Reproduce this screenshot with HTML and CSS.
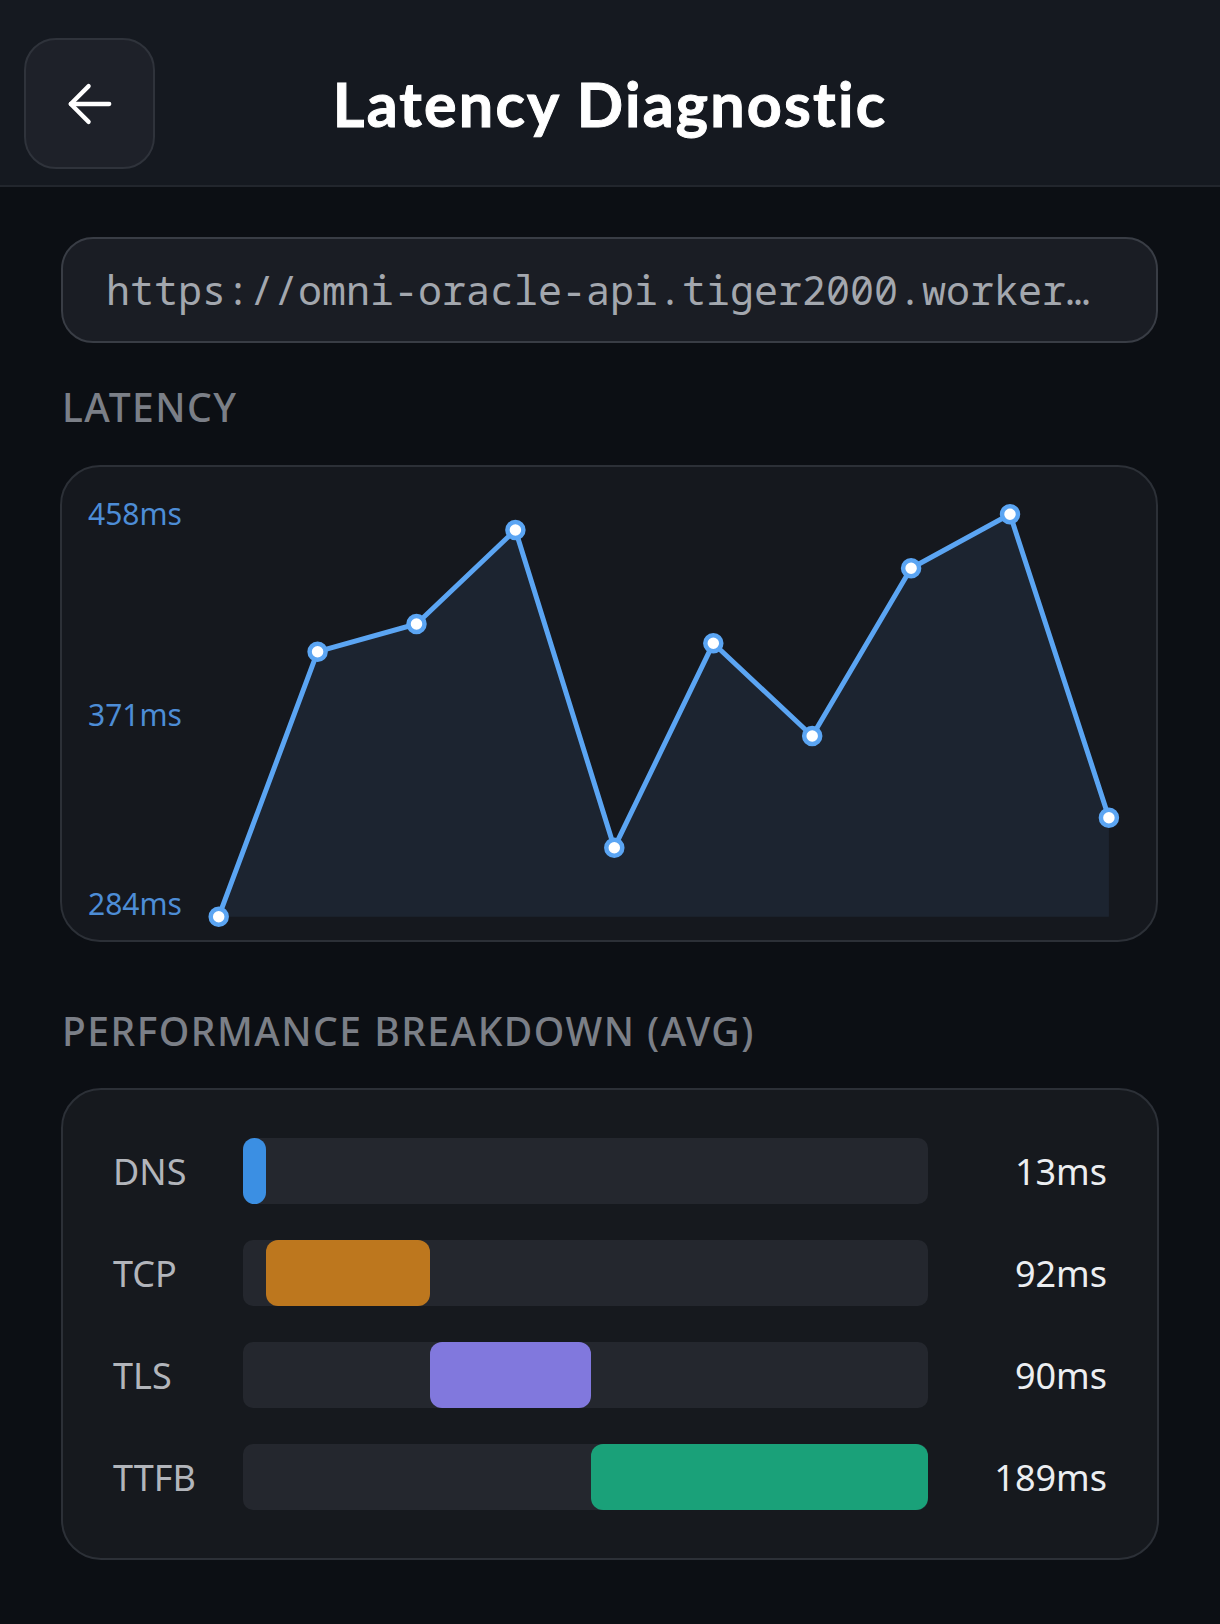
FILE: index.html
```html
<!DOCTYPE html>
<html lang="en">
<head>
<meta charset="utf-8">
<title>Latency Diagnostic</title>
<link rel="stylesheet" href="styles.css">
</head>
<body>
<header class="topbar">
  <button class="back-btn" aria-label="Back">
    <svg width="66" height="66" viewBox="0 0 24 24" fill="none" stroke="#ffffff" stroke-width="1.55" stroke-linecap="round" stroke-linejoin="round">
      <path d="M19 12H5"/>
      <path d="m11.5 18.5-6.5-6.5 6.5-6.5"/>
    </svg>
  </button>
  <h1 class="title">Latency Diagnostic</h1>
  <span class="spacer"></span>
</header>
<main class="content">
  <div class="url-box">https://omni-oracle-api.tiger2000.workers.dev</div>

  <h2 class="section-label">LATENCY</h2>
  <section class="chart-card">
    <div class="y-axis">
      <span class="tick tick-top">458ms</span>
      <span class="tick tick-mid">371ms</span>
      <span class="tick tick-bot">284ms</span>
    </div>
    <svg class="chart" width="930" height="473" viewBox="0 0 930 473">
      <polygon class="area" points="18.7,449.7 117.6,184.7 216.5,157 315.4,63 414.3,380.7 513.3,176.3 612.2,269 711.1,101.3 810,47.3 908.9,350.7 908.9,449.7"/>
      <polyline class="line" points="18.7,449.7 117.6,184.7 216.5,157 315.4,63 414.3,380.7 513.3,176.3 612.2,269 711.1,101.3 810,47.3 908.9,350.7"/>
      <g class="dots">
        <circle cx="18.7" cy="449.7" r="8"/>
        <circle cx="117.6" cy="184.7" r="8"/>
        <circle cx="216.5" cy="157" r="8"/>
        <circle cx="315.4" cy="63" r="8"/>
        <circle cx="414.3" cy="380.7" r="8"/>
        <circle cx="513.3" cy="176.3" r="8"/>
        <circle cx="612.2" cy="269" r="8"/>
        <circle cx="711.1" cy="101.3" r="8"/>
        <circle cx="810" cy="47.3" r="8"/>
        <circle cx="908.9" cy="350.7" r="8"/>
      </g>
    </svg>
  </section>

  <h2 class="section-label perf-label">PERFORMANCE BREAKDOWN (AVG)</h2>
  <section class="breakdown-card">
    <span class="row-label">DNS</span>
    <div class="track"><div class="bar bar-dns" style="margin-left:0%;width:3.39%"></div></div>
    <span class="row-value">13ms</span>

    <span class="row-label">TCP</span>
    <div class="track"><div class="bar bar-tcp" style="margin-left:3.39%;width:23.96%"></div></div>
    <span class="row-value">92ms</span>

    <span class="row-label">TLS</span>
    <div class="track"><div class="bar bar-tls" style="margin-left:27.35%;width:23.44%"></div></div>
    <span class="row-value">90ms</span>

    <span class="row-label">TTFB</span>
    <div class="track"><div class="bar bar-ttfb" style="margin-left:50.79%;width:49.21%"></div></div>
    <span class="row-value">189ms</span>
  </section>
</main>
</body>
</html>
```

FILE: styles.css
```css
* {
  box-sizing: border-box;
}

html, body {
  margin: 0;
  padding: 0;
}

body {
  width: 1220px;
  min-height: 1624px;
  background: #0c0f14;
  font-family: "Noto Sans", "Open Sans", sans-serif;
  color: #e9ebee;
}

.topbar {
  display: grid;
  grid-template-columns: 1fr auto 1fr;
  align-items: center;
  padding: 38px 24px 16px;
  background: #151920;
  border-bottom: 2px solid #22262d;
}

.back-btn {
  width: 131px;
  height: 131px;
  border-radius: 32px;
  border: 2px solid #2f333b;
  background: #1e2129;
  display: flex;
  align-items: center;
  justify-content: center;
  padding: 0;
  cursor: pointer;
}

.back-btn svg {
  display: block;
}

.title {
  margin: 0;
  font-family: "Lato", "Inter", sans-serif;
  font-weight: 700;
  font-size: 61px;
  line-height: 1;
  color: #ffffff;
  letter-spacing: 2.2px;
  -webkit-text-stroke: 1px #ffffff;
}

.content {
  padding: 50px 62px 0 60px;
}

.url-box {
  height: 106px;
  margin-left: 1px;
  border: 2px solid #393d45;
  border-radius: 32px;
  background: #1a1d24;
  padding: 0 43px;
  font-family: "Noto Sans Mono", "DejaVu Sans Mono", monospace;
  font-size: 40px;
  line-height: 102px;
  color: #a3a7ae;
  white-space: nowrap;
  overflow: hidden;
  text-overflow: ellipsis;
}

.section-label {
  margin: 37px 0 0 2px;
  font-family: "Noto Sans", "Open Sans", sans-serif;
  font-weight: 500;
  font-size: 39px;
  line-height: 53px;
  letter-spacing: 1.5px;
  color: #7b7f87;
}

.perf-label {
  margin-top: 62px;
}

.chart-card {
  margin-top: 32px;
  height: 477px;
  display: flex;
  border: 2px solid #2c3037;
  border-radius: 40px;
  background: #15181e;
  overflow: hidden;
}

.y-axis {
  width: 138px;
  flex: none;
  padding-left: 26px;
  display: flex;
  flex-direction: column;
}

.tick {
  font-size: 30px;
  line-height: 38px;
  color: #4d8dd6;
}

.tick-top {
  margin-top: 28px;
}

.tick-mid {
  margin-top: 163px;
}

.tick-bot {
  margin-top: 151px;
}

.chart {
  display: block;
  flex: none;
}

.area {
  fill: #1c2430;
}

.line {
  fill: none;
  stroke: #5ba5f3;
  stroke-width: 5;
  stroke-linejoin: round;
  stroke-linecap: round;
}

.dots circle {
  fill: #ffffff;
  stroke: #5ba5f3;
  stroke-width: 4.5;
}

.breakdown-card {
  margin-top: 31px;
  margin-left: 1px;
  margin-right: -1px;
  border: 2px solid #2c3037;
  border-radius: 40px;
  background: #16191e;
  padding: 48px 50px 48px 50px;
  display: grid;
  grid-template-columns: 130px 685px 1fr;
  grid-auto-rows: 66px;
  row-gap: 36px;
  align-items: center;
}

.row-label {
  font-size: 36px;
  color: #b2b5bb;
}

.row-value {
  font-size: 36px;
  color: #eceef1;
  text-align: right;
}

.track {
  height: 66px;
  background: #24272e;
  border-radius: 10px;
  display: flex;
}

.bar {
  height: 100%;
  border-radius: 12px;
}

.bar-dns {
  background: #3b8fe3;
}

.bar-tcp {
  background: #bd771e;
}

.bar-tls {
  background: #8178dd;
}

.bar-ttfb {
  background: #1aa179;
}
```
